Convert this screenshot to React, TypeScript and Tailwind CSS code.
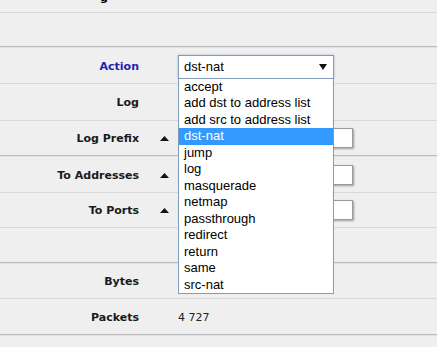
const options = [
  'accept',
  'add dst to address list',
  'add src to address list',
  'dst-nat',
  'jump',
  'log',
  'masquerade',
  'netmap',
  'passthrough',
  'redirect',
  'return',
  'same',
  'src-nat',
];

const labelFont = { fontFamily: '"DejaVu Sans", Verdana, sans-serif' };
const selectFont = { fontFamily: '"Liberation Sans", Arial, sans-serif' };

const Up = () => (
  <svg width="9" height="5" viewBox="0 0 9 5" className="block">
    <path d="M0 5 L4.5 0 L9 5 Z" fill="#111" />
  </svg>
);

const Line = () => <div className="h-px bg-[#d9d9d9]" />;
const Double = () => (
  <div>
    <div className="h-px bg-[#bdbdbd]" />
    <div className="h-px bg-[#e2e2e2]" />
  </div>
);

type RowProps = {
  label?: string;
  blue?: boolean;
  arrow?: boolean;
  h: string;
  children?: React.ReactNode;
};

const Row = ({ label, blue, arrow, h, children }: RowProps) => (
  <div className={`flex items-center ${h}`}>
    <div
      className={`w-[139px] pt-[3px] text-right text-[11px] font-bold ${blue ? 'text-[#2121b5]' : 'text-[#1a1a1a]'}`}
      style={labelFont}
    >
      {label}
    </div>
    <div className="w-[39px] pl-[21px] pt-px">{arrow && <Up />}</div>
    <div className="relative flex-1">{children}</div>
  </div>
);

const Input = () => (
  <div className="h-[20px] w-[175px] border border-[#9a9a9a] bg-white shadow-[1px_1px_2px_rgba(0,0,0,0.35)]" />
);

export default function App() {
  return (
    <div className="h-[347px] w-[437px] overflow-hidden bg-[#efefef]">
      <div className="h-[12px] overflow-hidden pl-[100px]">
        <span className="-mt-[10px] block text-[11px] font-bold text-black" style={labelFont}>
          g
        </span>
      </div>
      <Line />
      <div className="h-[33px]" />
      <Double />
      <Row label="Action" blue h="h-[35px]">
        <div className="relative z-10 mt-[2px] w-[156px]">
          <div
            className="flex h-[24px] items-center justify-between border border-[#7f9db9] bg-white pl-[5px] pr-[6px] text-[13px] text-black shadow-[0_0_2px_rgba(80,130,200,0.5)]"
            style={selectFont}
          >
            <span>dst-nat</span>
            <svg width="8" height="6" viewBox="0 0 8 6">
              <path d="M0 0 L8 0 L4 6 Z" fill="#111" />
            </svg>
          </div>
          <ul
            className="absolute left-0 top-full w-[156px] -mt-px border border-[#7f9db9] bg-white text-[13px] text-black"
            style={selectFont}
          >
            {options.map((o) => (
              <li
                key={o}
                className={`flex h-[16.5px] items-center pb-px pl-[5px] leading-none ${o === 'dst-nat' ? 'bg-[#3399ff] text-white' : ''}`}
              >
                {o}
              </li>
            ))}
          </ul>
        </div>
      </Row>
      <Line />
      <Row label="Log" h="h-[36px]" />
      <Line />
      <Row label="Log Prefix" arrow h="h-[34px]">
        <Input />
      </Row>
      <Double />
      <Row label="To Addresses" arrow h="h-[35px]">
        <Input />
      </Row>
      <Line />
      <Row label="To Ports" arrow h="h-[34px]">
        <Input />
      </Row>
      <Line />
      <div className="h-[34px]" />
      <Double />
      <Row label="Bytes" h="h-[34px]" />
      <Line />
      <Row label="Packets" h="h-[35px]">
        <span className="block pt-[3px] text-[11px] text-[#222]" style={labelFont}>
          4 727
        </span>
      </Row>
      <Double />
    </div>
  );
}
